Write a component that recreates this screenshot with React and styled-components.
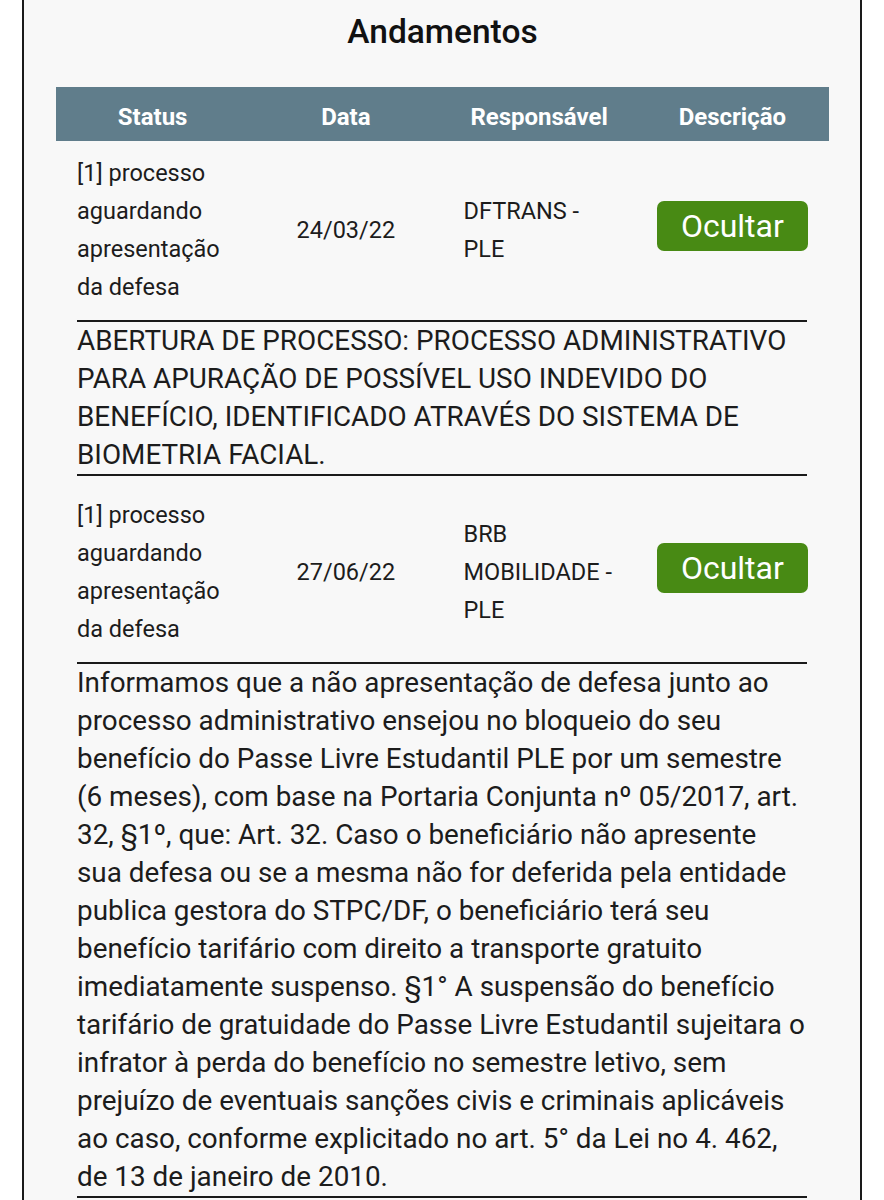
import React from "react";
import styled, { createGlobalStyle } from "styled-components";

const GlobalStyle = createGlobalStyle`
  body {
    margin: 0;
    background: #ffffff;
    font-family: Roboto, "Noto Sans", "Liberation Sans", sans-serif;
    color: #1c1c1c;
  }
`;

const andamentos = [
  {
    status: "[1] processo aguardando apresentação da defesa",
    data: "24/03/22",
    responsavel: "DFTRANS - PLE",
    descricao:
      "ABERTURA DE PROCESSO: PROCESSO ADMINISTRATIVO PARA APURAÇÃO DE POSSÍVEL USO INDEVIDO DO BENEFÍCIO, IDENTIFICADO ATRAVÉS DO SISTEMA DE BIOMETRIA FACIAL.",
  },
  {
    status: "[1] processo aguardando apresentação da defesa",
    data: "27/06/22",
    responsavel: "BRB MOBILIDADE - PLE",
    descricao:
      "Informamos que a não apresentação de defesa junto ao processo administrativo ensejou no bloqueio do seu benefício do Passe Livre Estudantil PLE por um semestre (6 meses), com base na Portaria Conjunta nº 05/2017, art. 32, §1º, que: Art. 32. Caso o beneficiário não apresente sua defesa ou se a mesma não for deferida pela entidade publica gestora do STPC/DF, o beneficiário terá seu benefício tarifário com direito a transporte gratuito imediatamente suspenso. §1° A suspensão do benefício tarifário de gratuidade do Passe Livre Estudantil sujeitara o infrator à perda do benefício no semestre letivo, sem prejuízo de eventuais sanções civis e criminais aplicáveis ao caso, conforme explicitado no art. 5° da Lei no 4. 462, de 13 de janeiro de 2010.",
  },
];

const App = () => {
  return (
    <>
      <GlobalStyle />
      <Card>
        <Title>Andamentos</Title>
        <Table>
          <thead>
            <tr>
              <Th>Status</Th>
              <Th>Data</Th>
              <Th>Responsável</Th>
              <Th>Descrição</Th>
            </tr>
          </thead>
          <tbody>
            {andamentos.map((item, i) => (
              <React.Fragment key={i}>
                <tr>
                  <Td $first={i === 0}>{item.status}</Td>
                  <Td $first={i === 0} $center>
                    {item.data}
                  </Td>
                  <Td $first={i === 0}>{item.responsavel}</Td>
                  <Td $first={i === 0} $center>
                    <HideButton>Ocultar</HideButton>
                  </Td>
                </tr>
                <tr>
                  <DescCell colSpan={4}>
                    <Description>{item.descricao}</Description>
                  </DescCell>
                </tr>
              </React.Fragment>
            ))}
          </tbody>
        </Table>
      </Card>
    </>
  );
};

export default App;

const Card = styled.div`
  margin: -20px 22px 0;
  padding: 20px 31px 40px 32px;
  background: #f8f8f8;
  border: 2px solid #1a1a1a;
  border-top: none;
  min-height: 1300px;
`;

const Title = styled.h2`
  margin: 0 0 23px;
  line-height: 64px;
  font-size: 33.5px;
  font-weight: 500;
  text-align: center;
  color: #111;
`;

const Table = styled.table`
  width: 100%;
  table-layout: fixed;
  border-collapse: collapse;
`;

const Th = styled.th`
  height: 49px;
  padding: 5px 0 0;
  background: #607d8b;
  color: #ffffff;
  font-size: 24px;
  font-weight: 700;
  text-align: center;
  vertical-align: middle;
`;

const Td = styled.td`
  padding: ${(p) => (p.$first ? "13px" : "20px")} 12px 14px
    ${(p) => (p.$center ? "12px" : "21px")};
  font-size: 23.5px;
  line-height: 38px;
  text-align: ${(p) => (p.$center ? "center" : "left")};
  vertical-align: middle;
  color: #1c1c1c;
`;

const HideButton = styled.button`
  display: block;
  width: 151px;
  height: 50px;
  margin: -8px auto 0;
  border: none;
  border-radius: 7px;
  background: #488a14;
  color: #ffffff;
  font-family: Roboto, "Liberation Sans", sans-serif;
  font-size: 32px;
  cursor: pointer;
`;

const DescCell = styled.td`
  padding: 0 22px 0 21px;
`;

const Description = styled.div`
  border-top: 2px solid #1a1a1a;
  border-bottom: 2px solid #1a1a1a;
  font-size: 27.85px;
  line-height: 38px;
  color: #1c1c1c;
`;
